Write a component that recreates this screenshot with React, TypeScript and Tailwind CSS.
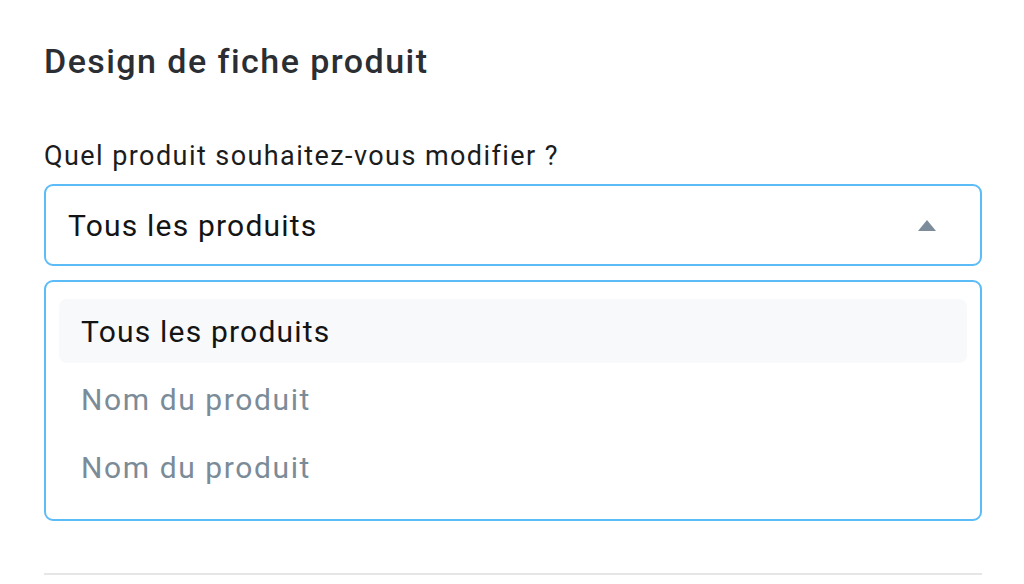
import React from "react";

export default function App() {
  return (
    <div
      className="w-[1024px] h-[584px] bg-white overflow-hidden pl-[44px] pr-[42px] pt-[39px]"
      style={{ fontFamily: "Roboto, 'Noto Sans', sans-serif" }}
    >
      <h1 className="text-[34px] leading-[44px] font-medium text-[#2b2e33] tracking-[1.45px]">
        Design de fiche produit
      </h1>
      <div className="mt-[57px] text-[27px] leading-[32px] text-[#1c1c1c] tracking-[1.43px]">
        Quel produit souhaitez-vous modifier ?
      </div>
      <div className="mt-[12px] h-[82px] border-2 border-[#5bbcf8] rounded-[9px] flex items-center justify-between pl-[22px] pr-[44px]">
        <span className="text-[30px] text-[#141414] tracking-[1.2px]">Tous les produits</span>
        <svg width="18" height="11" viewBox="0 0 18 11">
          <path d="M9 0 L18 11 L0 11 Z" fill="#7c8c9a" />
        </svg>
      </div>
      <div className="mt-[14px] h-[241px] border-2 border-[#5bbcf8] rounded-[9px] pt-[17px] px-[13px] flex flex-col gap-[4px]">
        <div className="h-[64px] shrink-0 rounded-[8px] bg-[#f8f9fb] flex items-center pl-[22px] text-[30px] text-[#141414] tracking-[1.2px]">
          Tous les produits
        </div>
        <div className="h-[64px] shrink-0 flex items-center pl-[22px] text-[30px] text-[#7b8b98] tracking-[1.6px]">
          Nom du produit
        </div>
        <div className="h-[64px] shrink-0 flex items-center pl-[22px] text-[30px] text-[#7b8b98] tracking-[1.6px]">
          Nom du produit
        </div>
      </div>
      <div className="mt-[52px] h-[2px] bg-[#e6e6e6]" />
    </div>
  );
}
